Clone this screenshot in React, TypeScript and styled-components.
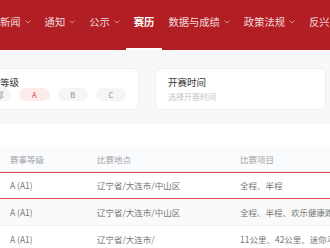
import { FC } from 'react'
import styled, { createGlobalStyle } from 'styled-components'

const GlobalStyle = createGlobalStyle`
    html, body {
        margin: 0;
        padding: 0;
        background: #f7f8fa;
        overflow: hidden;
        font-family: "Noto Sans CJK SC", "Noto Sans", sans-serif;
    }
`

const Header = styled.header`
    height: 50px;
    background-color: #b11e23;
    display: flex;
    align-items: flex-start;
    white-space: nowrap;
`
const NavItem = styled.div<{ $active?: boolean }>`
    position: relative;
    height: 50px;
    display: flex;
    align-items: flex-start;
    padding-top: 15px;
    box-sizing: border-box;
    margin-right: 14px;
    font-size: 10.3px;
    line-height: 13px;
    color: ${(p) => (p.$active ? '#fff' : 'rgba(255, 255, 255, 0.85)')};
    font-weight: ${(p) => (p.$active ? 700 : 400)};

    ${(p) =>
        p.$active &&
        `
        &::after {
            content: '';
            position: absolute;
            left: 50%;
            bottom: 0;
            width: 36px;
            height: 2px;
            margin-left: -18px;
            background: #fff;
        }
    `}
`
const Chevron = styled.svg`
    width: 6px;
    height: 4px;
    margin: 5px 0 0 4px;
`

const Main = styled.main`
    padding-top: 18px;
`
const FilterRow = styled.div`
    display: flex;
    gap: 16px;
    margin-left: -32px;
`
const Card = styled.div`
    width: 171px;
    height: 42px;
    box-sizing: border-box;
    padding: 7px 12px;
    background: #fff;
    border: 1px solid #eceef2;
    border-radius: 6px;
`
const CardTitle = styled.div`
    font-size: 9.5px;
    line-height: 12px;
    color: #333;
`
const Pills = styled.div`
    display: flex;
    gap: 8px;
`
const Pill = styled.span<{ $active?: boolean }>`
    width: 32px;
    height: 13px;
    border-radius: 7px;
    display: flex;
    align-items: center;
    justify-content: center;
    font-size: 7.5px;
    background: ${(p) => (p.$active ? '#fdecec' : '#f5f5f7')};
    color: ${(p) => (p.$active ? '#d83a40' : '#8a8a8a')};
`
const Placeholder = styled.div`
    margin-top: 3px;
    font-size: 8px;
    line-height: 12px;
    color: #c2c4c8;
`

const TableCard = styled.section`
    margin-top: 14px;
    padding-top: 22px;
    background: #fff;
    width: 420px;
`
const Row = styled.div<{ $head?: boolean; $selected?: boolean; $striped?: boolean }>`
    display: grid;
    grid-template-columns: 87px 143px 1fr;
    padding-left: 10px;
    height: ${(p) => (p.$head ? '24px' : '25px')};
    align-items: center;
    font-size: 8.5px;
    line-height: 11px;
    white-space: nowrap;
    color: ${(p) => (p.$head ? '#a2a4a8' : '#777')};
    background: ${(p) => (p.$head ? '#fafbfc' : p.$striped ? '#fafafa' : '#fff')};
    border-top: 1px solid ${(p) => (p.$selected ? '#e0494e' : 'transparent')};
    border-bottom: 1px solid ${(p) => (p.$selected ? '#e0494e' : '#f0f1f3')};
`
const Cell = styled.span``

const navItems = [
    { label: '新闻', menu: true },
    { label: '通知', menu: true },
    { label: '公示', menu: true },
    { label: '赛历', active: true },
    { label: '数据与成绩', menu: true },
    { label: '政策法规', menu: true },
    { label: '反兴奋剂', menu: true },
]

const rows = [
    { level: 'A (A1)', place: '辽宁省/大连市/中山区', items: '全程、半程' },
    { level: 'A (A1)', place: '辽宁省/大连市/中山区', items: '全程、半程、欢乐健康跑' },
    { level: 'A (A1)', place: '辽宁省/大连市/', items: '11公里、42公里、迷你马拉松' },
]

const App: FC = () => {
    return (
        <>
            <GlobalStyle />
            <Header>
                {navItems.map((n) => (
                    <NavItem key={n.label} $active={n.active}>
                        {n.label}
                        {n.menu && (
                            <Chevron viewBox="0 0 6 4">
                                <polyline
                                    points="0.5,0.5 3,3 5.5,0.5"
                                    fill="none"
                                    stroke="rgba(255,255,255,0.5)"
                                    strokeWidth="1"
                                />
                            </Chevron>
                        )}
                    </NavItem>
                ))}
            </Header>
            <Main>
                <FilterRow>
                    <Card>
                        <CardTitle>赛事等级</CardTitle>
                        <Pills>
                            <Pill>全部</Pill>
                            <Pill $active>A</Pill>
                            <Pill>B</Pill>
                            <Pill>C</Pill>
                        </Pills>
                    </Card>
                    <Card>
                        <CardTitle>开赛时间</CardTitle>
                        <Placeholder>选择开赛时间</Placeholder>
                    </Card>
                </FilterRow>
                <TableCard>
                    <Row $head>
                        <Cell>赛事等级</Cell>
                        <Cell>比赛地点</Cell>
                        <Cell>比赛项目</Cell>
                    </Row>
                    {rows.map((r, i) => (
                        <Row key={i} $selected={i === 0} $striped={i === 1}>
                            <Cell>{r.level}</Cell>
                            <Cell>{r.place}</Cell>
                            <Cell>{r.items}</Cell>
                        </Row>
                    ))}
                </TableCard>
            </Main>
        </>
    )
}

export default App
